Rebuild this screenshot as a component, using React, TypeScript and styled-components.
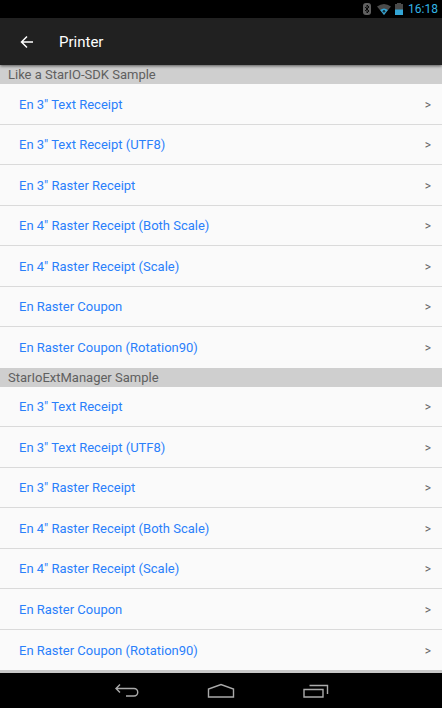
import React from "react";
import styled, { createGlobalStyle } from "styled-components";

const GlobalStyle = createGlobalStyle`
  * { box-sizing: border-box; }
  body { margin: 0; background: #000; font-family: Roboto, "Liberation Sans", sans-serif; }
  button { font: inherit; border: 0; margin: 0; padding: 0; background: none; cursor: pointer; }
`;

const Screen = styled.div`
  display: flex;
  flex-direction: column;
  min-height: 100vh;
`;

const StatusBar = styled.div`
  display: flex;
  flex: none;
  align-items: center;
  justify-content: flex-end;
  height: 18px;
  padding-right: 4px;
  background: #000;
`;

const StatusIcon = styled.svg<{ $gap: number }>`
  flex: none;
  margin-right: ${(p) => p.$gap}px;
`;

const Clock = styled.time`
  color: #33b5e5;
  font-size: 12px;
  line-height: 18px;
`;

const AppBar = styled.header`
  display: flex;
  flex: none;
  align-items: center;
  height: 47px;
  padding-left: 16px;
  background: #212121;
  box-shadow: 0 1px 3px rgba(0, 0, 0, 0.6);
  z-index: 1;
`;

const BackButton = styled.button`
  display: flex;
  align-items: center;
  justify-content: center;
  width: 22px;
  height: 32px;
`;

const Title = styled.h1`
  margin: 0 0 0 21px;
  color: #fff;
  font-size: 15px;
  font-weight: 400;
  line-height: 24px;
`;

const Content = styled.main`
  display: flex;
  flex: 1;
  flex-direction: column;
  background: #fafafa;
  border-bottom: 3px solid #c8c8c8;
`;

const Section = styled.section`
  display: flex;
  flex: 1 0 auto;
  flex-direction: column;
`;

const SectionHeader = styled.h2`
  flex: none;
  height: 19px;
  margin: 0;
  padding-left: 8px;
  background: #cfcfcf;
  color: #606060;
  font-size: 13px;
  font-weight: 400;
  line-height: 20px;
`;

const List = styled.ul`
  display: grid;
  flex: 1;
  grid-auto-rows: minmax(40px, 1fr);
  margin: 0;
  padding: 0;
  list-style: none;
`;

const Item = styled.li`
  display: flex;
  border-bottom: 1px solid #dadada;
  &:last-child { border-bottom: 0; }
`;

const RowButton = styled.button`
  display: flex;
  flex: 1;
  align-items: center;
  justify-content: space-between;
  padding-top: 2px;
`;

const Label = styled.span`
  padding-left: 19px;
  color: #2a80fa;
  font-size: 13px;
  line-height: 20px;
`;

const Chevron = styled.span`
  padding-right: 11px;
  color: #666;
  font-size: 12px;
  line-height: 20px;
`;

const NavBar = styled.nav`
  display: flex;
  flex: none;
  align-items: center;
  justify-content: center;
  height: 35px;
  background: #000;
`;

const NavButton = styled.button`
  display: flex;
  align-items: center;
  justify-content: center;
  width: 95px;
  height: 35px;
`;

const receipts = [
  'En 3" Text Receipt',
  'En 3" Text Receipt (UTF8)',
  'En 3" Raster Receipt',
  'En 4" Raster Receipt (Both Scale)',
  'En 4" Raster Receipt (Scale)',
  "En Raster Coupon",
  "En Raster Coupon (Rotation90)",
];

const sections = ["Like a StarIO-SDK Sample", "StarIoExtManager Sample"];

export default function App() {
  return (
    <Screen>
      <GlobalStyle />
      <StatusBar>
        <StatusIcon $gap={6} width="8" height="12" viewBox="0 0 8 12" aria-label="Bluetooth">
          <rect width="8" height="12" rx="3" fill="#606060" />
          <path d="M2 4l4 4-2 2V2l2 2-4 4" fill="none" stroke="#000" strokeWidth="0.9" />
        </StatusIcon>
        <StatusIcon $gap={4} width="14" height="12" viewBox="0 0 14 12" aria-label="Wi-Fi">
          <path d="M0 3.500Q7-1.500 14 3.500L7 12z" fill="#4a4a4a" />
          <path d="M3.200 7Q7 4 10.800 7L7 12z" fill="#33a5d5" />
          <circle cx="7" cy="8.200" r="1.300" fill="#15303a" />
        </StatusIcon>
        <StatusIcon $gap={5} width="8" height="12" viewBox="0 0 8 12" aria-label="Battery">
          <path d="M2 0h4v1h2v6H0V1h2z" fill="#4a4a4a" />
          <path d="M0 6.500h8V12H0z" fill="#33a5d5" />
        </StatusIcon>
        <Clock>16:18</Clock>
      </StatusBar>

      <AppBar>
        <BackButton aria-label="Back">
          <svg width="14" height="14" viewBox="0 0 14 14" fill="none" stroke="#fff" strokeWidth="1.500">
            <path d="M13 7H2M7 1.500L1.500 7L7 12.500" />
          </svg>
        </BackButton>
        <Title>Printer</Title>
      </AppBar>

      <Content>
        {sections.map((name) => (
          <Section key={name}>
            <SectionHeader>{name}</SectionHeader>
            <List>
              {receipts.map((label) => (
                <Item key={label}>
                  <RowButton>
                    <Label>{label}</Label>
                    <Chevron>&gt;</Chevron>
                  </RowButton>
                </Item>
              ))}
            </List>
          </Section>
        ))}
      </Content>

      <NavBar>
        <NavButton aria-label="Go back">
          <svg width="26" height="16" viewBox="0 0 26 16" fill="none" stroke="#aaa" strokeWidth="1.400">
            <path d="M7 1.500L3 5.500l4 4M3 5.500h18a3.600 3.600 0 0 1 0 7.500h-8" />
          </svg>
        </NavButton>
        <NavButton aria-label="Home">
          <svg width="28" height="16" viewBox="0 0 28 16" fill="none" stroke="#aaa" strokeWidth="1.400">
            <path d="M1.500 14V6L14 1.500l12.500 4.500v8z" />
          </svg>
        </NavButton>
        <NavButton aria-label="Recent apps">
          <svg width="26" height="16" viewBox="0 0 26 16" fill="none" stroke="#aaa" strokeWidth="1.400">
            <path d="M1 6.500h19v7.500H1zM6.500 2.500h18v8.500" />
          </svg>
        </NavButton>
      </NavBar>
    </Screen>
  );
}
